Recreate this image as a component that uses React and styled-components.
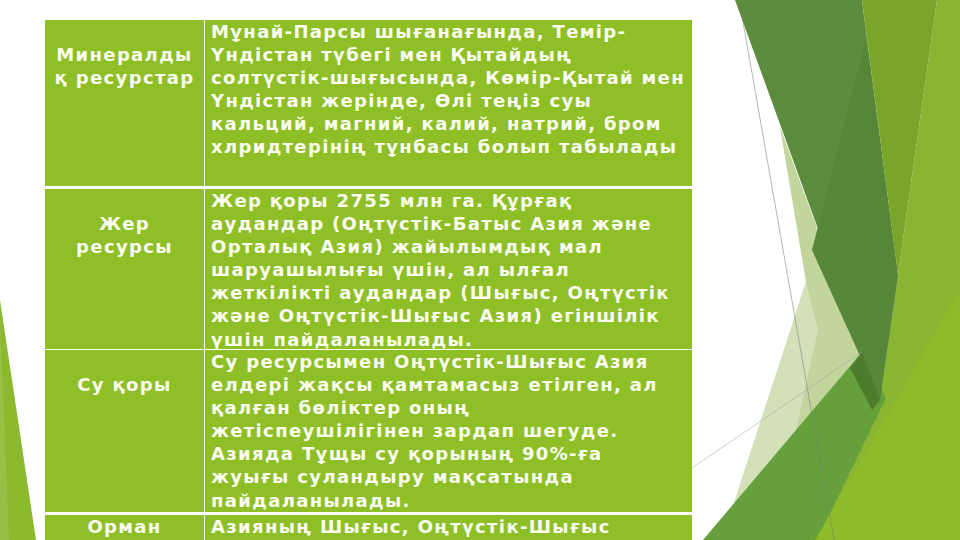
import React from "react";
import styled, { createGlobalStyle } from "styled-components";

const GlobalStyle = createGlobalStyle`
  html, body {
    margin: 0;
    padding: 0;
    background: #ffffff;
  }
  body {
    font-family: "DejaVu Sans", "Liberation Sans", sans-serif;
  }
`;

const rows = [
  {
    title: ["Минералды", "қ ресурстар"],
    indent: true,
    height: 166,
    gap: 0,
    lines: [
      "Мұнай-Парсы шығанағында, Темір-",
      "Үндістан түбегі мен Қытайдың",
      "солтүстік-шығысында, Көмір-Қытай мен",
      "Үндістан жерінде, Өлі теңіз суы",
      "кальций, магний, калий, натрий, бром",
      "хлридтерінің тұнбасы болып табылады",
    ],
  },
  {
    title: ["Жер", "ресурсы"],
    indent: true,
    height: 160,
    gap: 3,
    lines: [
      "Жер қоры 2755 млн га. Құрғақ",
      "аудандар (Оңтүстік-Батыс Азия және",
      "Орталық Азия) жайылымдық мал",
      "шаруашылығы үшін, ал ылғал",
      "жеткілікті аудандар (Шығыс, Оңтүстік",
      "және Оңтүстік-Шығыс Азия) егіншілік",
      "үшін пайдаланылады.",
    ],
  },
  {
    title: ["Су қоры"],
    indent: true,
    height: 162,
    gap: 1,
    lines: [
      "Су ресурсымен Оңтүстік-Шығыс Азия",
      "елдері жақсы қамтамасыз етілген, ал",
      "қалған бөліктер оның",
      "жетіспеушілігінен зардап шегуде.",
      "Азияда Тұщы су қорының 90%-ға",
      "жуығы суландыру мақсатында",
      "пайдаланылады.",
    ],
  },
  {
    title: ["Орман"],
    indent: false,
    height: 60,
    gap: 3,
    lines: ["Азияның Шығыс, Оңтүстік-Шығыс"],
  },
];

const Backdrop = () => (
  <Art viewBox="0 0 960 540" preserveAspectRatio="none">
    {/* left sliver */}
    <polygon points="0,300 36,540 0,540" fill="#8cba2f" />
    <polygon points="0,318 9,540 0,540" fill="#9cc350" opacity="0.7" />

    {/* right facets */}
    <polygon points="780,127 806,282 722,540 860,540 880,400" fill="#c2d59d" />
    <polygon points="806,282 722,540 772,540 818,330" fill="#d8e2c2" opacity="0.8" />
    <polygon points="937,0 960,0 960,540 817,540 880,400 898,275" fill="#8ab533" />
    <polygon points="862,352 886,398 817,540 703,540" fill="#65a03c" />
    <polygon points="735,0 862,0 898,275 880,400" fill="#5e8c3e" />
    <polygon points="866,40 898,275 880,400 812,250" fill="#578639" />
    <polygon points="862,0 937,0 898,275" fill="#78a52a" />
    <polygon points="862,352 880,400 872,410 850,368" fill="#4d7d2c" />
    <polygon points="960,290 960,540 815,540" fill="#8ebb29" />

    {/* hairlines */}
    <line x1="742" y1="16" x2="834" y2="540" stroke="#7d7d7d" strokeWidth="0.8" opacity="0.7" />
    <line x1="692" y1="468" x2="862" y2="352" stroke="#9a9a9a" strokeWidth="0.8" opacity="0.6" />
  </Art>
);

export default function App() {
  return (
    <>
      <GlobalStyle />
      <Slide>
        <Backdrop />
        <Table>
          {rows.map((row, i) => (
            <Row key={i} $gap={row.gap} $height={row.height}>
              <TitleCell $indent={row.indent}>
                {row.title.map((t) => (
                  <Line key={t}>{t}</Line>
                ))}
              </TitleCell>
              <TextCell>
                {row.lines.map((t) => (
                  <Line key={t}>{t}</Line>
                ))}
              </TextCell>
            </Row>
          ))}
        </Table>
      </Slide>
    </>
  );
}

const Slide = styled.div`
  position: relative;
  width: 960px;
  height: 540px;
  overflow: hidden;
  background: #ffffff;
  padding: 20px 0 0 45px;
  box-sizing: border-box;
`;

const Art = styled.svg`
  position: absolute;
  inset: 0;
  width: 960px;
  height: 540px;
  z-index: 0;
`;

const Table = styled.div`
  position: relative;
  z-index: 1;
  width: 647px;
  display: flex;
  flex-direction: column;
`;

const Row = styled.div`
  display: grid;
  grid-template-columns: 159px 487px;
  grid-template-rows: minmax(0, 1fr);
  column-gap: 1px;
  margin-top: ${(p) => p.$gap}px;
  height: ${(p) => p.$height}px;
  flex-shrink: 0;
`;

const Cell = styled.div`
  background: #8ebf27;
  color: #fbfdf2;
  font-family: "DejaVu Sans", "Liberation Sans", sans-serif;
  font-weight: 700;
  font-size: 18px;
  line-height: 23.1px;
  letter-spacing: 1.35px;
  box-sizing: border-box;
  overflow: hidden;
`;

const TitleCell = styled(Cell)`
  text-align: center;
  padding: ${(p) => (p.$indent ? "22.5px" : "0")} 2px 0;
`;

const TextCell = styled(Cell)`
  padding: 0 6px;
`;

const Line = styled.div`
  white-space: nowrap;
`;
